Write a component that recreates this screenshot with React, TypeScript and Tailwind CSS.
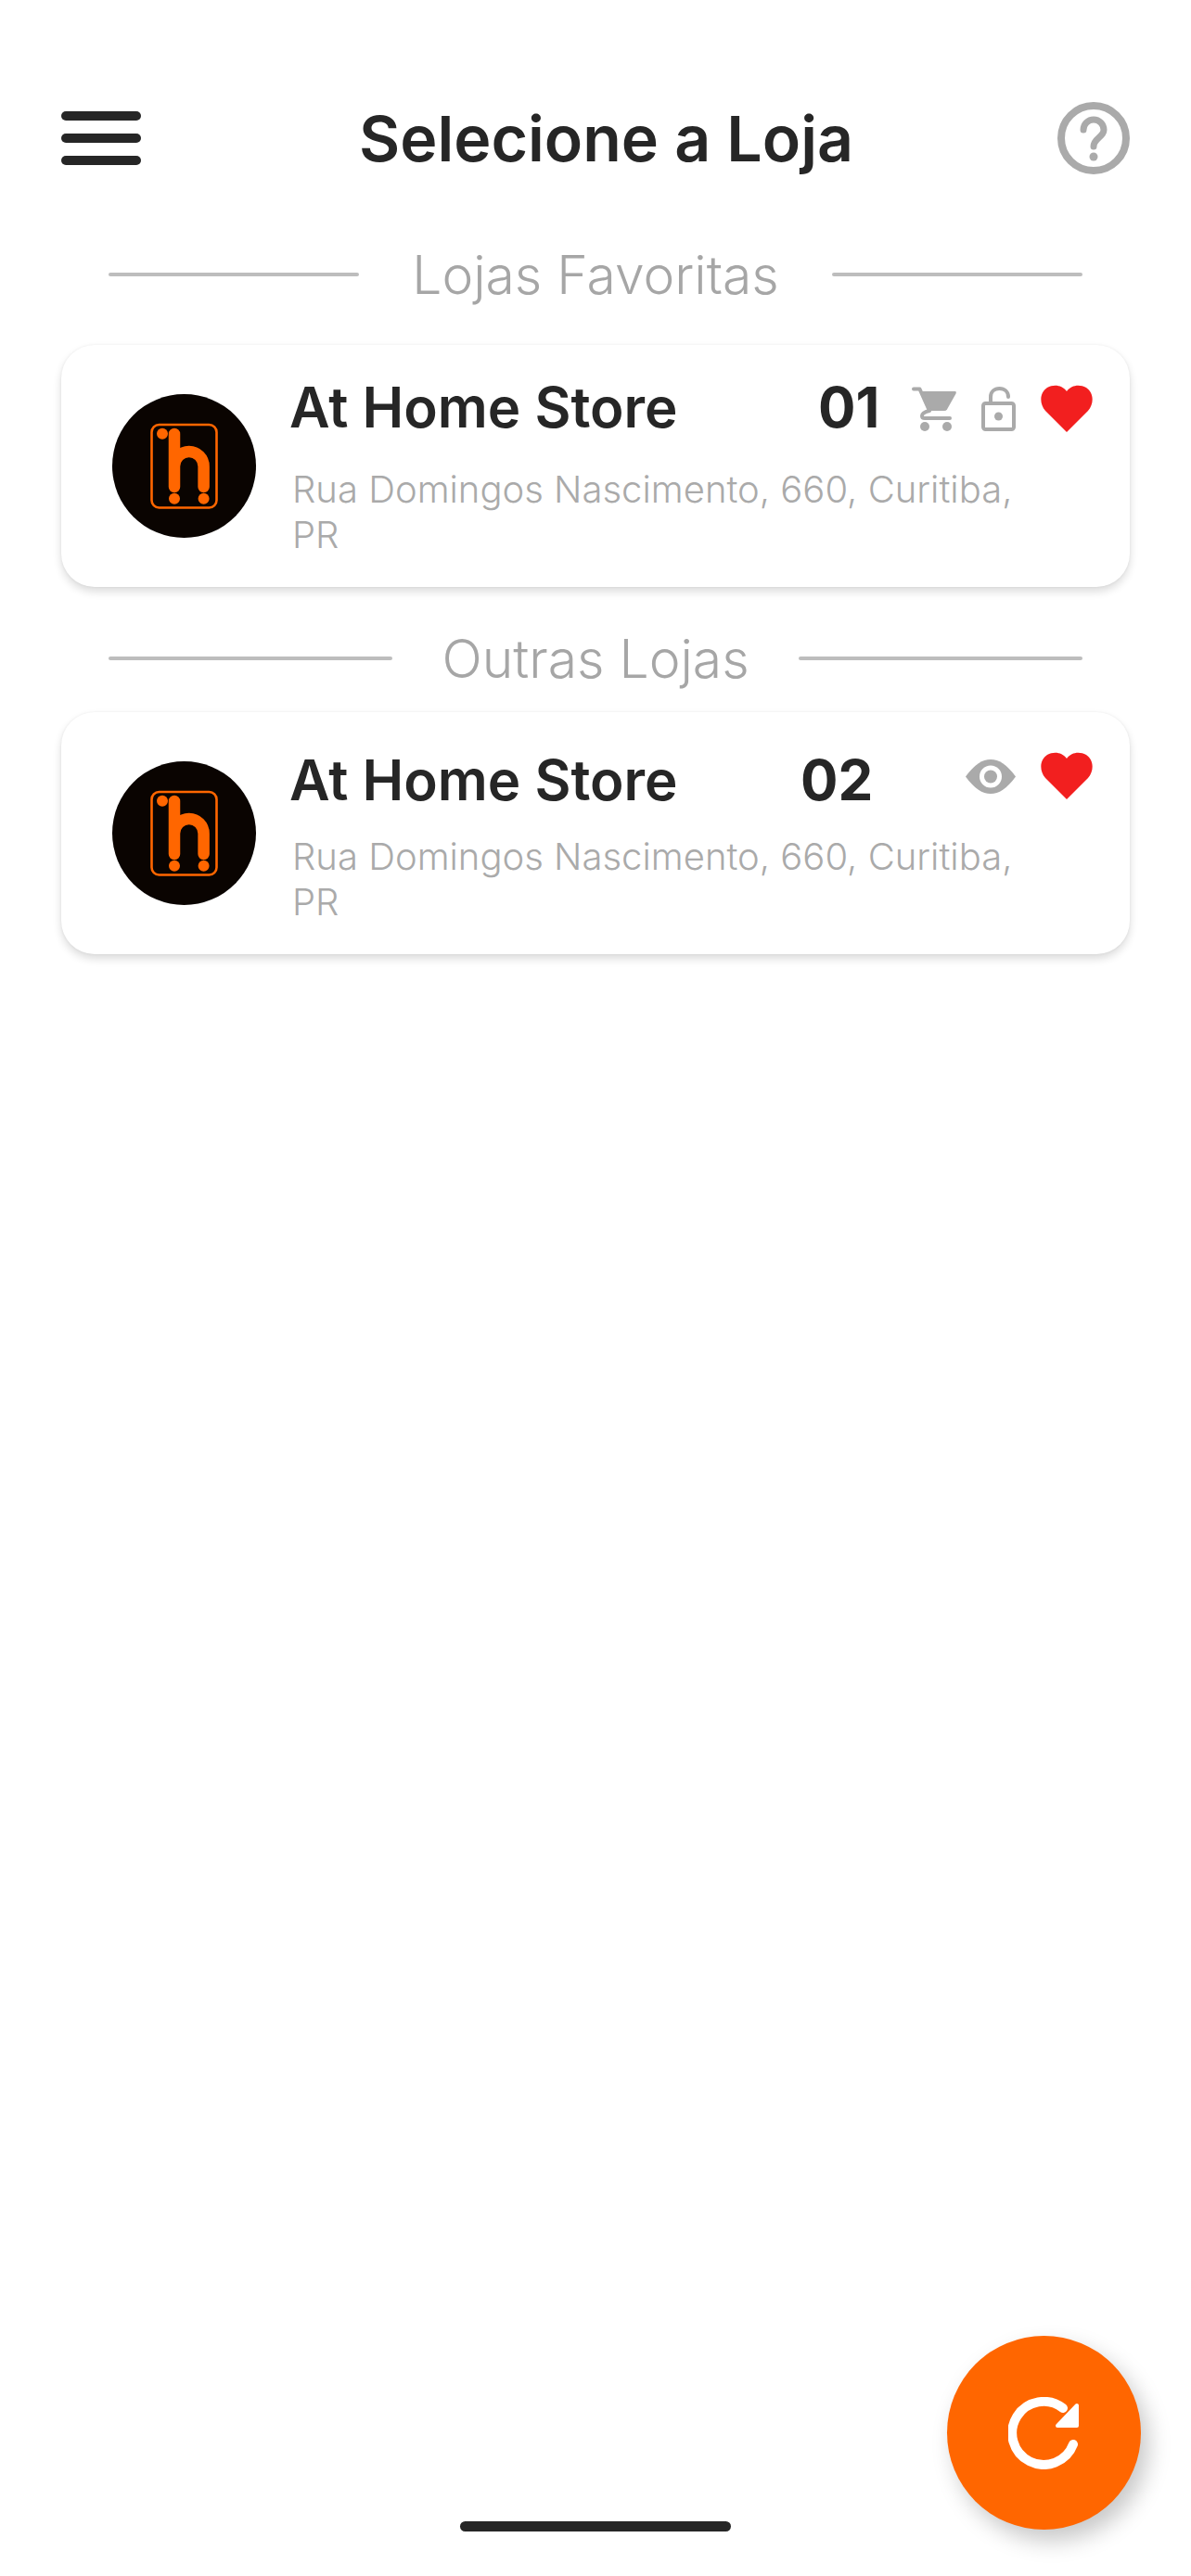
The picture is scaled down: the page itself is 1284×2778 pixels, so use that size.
import React from 'react';

const Logo = () => (
  <svg width="155" height="155" viewBox="0 0 155 155" className="shrink-0">
    <circle cx="77.5" cy="77.5" r="77.5" fill="#0a0401" />
    <rect x="42.5" y="33" width="70" height="89.5" rx="8" fill="none" stroke="#ff6600" strokeWidth="2.6" />
    <circle cx="54" cy="42.7" r="6" fill="#ff6600" />
    <path d="M67 43V100M67 78A15.8 16 0 0 1 98.6 78V100" fill="none" stroke="#ff6600" strokeWidth="12.5" strokeLinecap="round" />
    <circle cx="67" cy="112.7" r="6" fill="#ff6600" />
    <circle cx="98.6" cy="112.7" r="6" fill="#ff6600" />
  </svg>
);

const Heart = () => (
  <svg width="56" height="51" viewBox="0 0 56 51" className="shrink-0">
    <path d="M28 51L5 28C-2 20-1 8 7 3C14-1 23 0 28 7C33 0 42-1 49 3C57 8 58 20 51 28Z" fill="#f21f1f" />
  </svg>
);

const Cart = () => (
  <svg width="48" height="48" viewBox="0 0 48 48" className="shrink-0">
    <path d="M11 5H46.5Q48.500 5 47.500 7.500L38 24.500Q37 26 35 26H18Z" fill="#aaa" />
    <path d="M2 2.500H8.500L19 26Q11 28 11 31.500Q11 34 14 34H41" fill="none" stroke="#aaa" strokeWidth="4" strokeLinecap="round" strokeLinejoin="round" />
    <circle cx="14" cy="43" r="5" fill="#aaa" />
    <circle cx="38" cy="43" r="5" fill="#aaa" />
  </svg>
);

const Lock = () => (
  <svg width="37" height="48" viewBox="0 0 37 48" className="shrink-0">
    <rect x="2" y="18" width="33" height="28" rx="2.500" fill="none" stroke="#aaa" strokeWidth="4" />
    <path d="M10 17V11C10 5.500 14 2 19.500 2C25 2 29 5.500 29 11" fill="none" stroke="#aaa" strokeWidth="4" strokeLinecap="round" />
    <circle cx="18.500" cy="32" r="4.500" fill="#aaa" />
  </svg>
);

const Eye = () => (
  <svg width="54" height="37" viewBox="0 0 54 37" className="shrink-0">
    <path d="M0 18.500C10 5 18 0 27 0C36 0 44 5 54 18.500C44 32 36 37 27 37C18 37 10 32 0 18.500Z" fill="#aaa" />
    <circle cx="27" cy="18.500" r="12" fill="#fff" />
    <circle cx="27" cy="18.500" r="7" fill="#aaa" />
  </svg>
);

const SectionTitle = ({ title, gap }: { title: string; gap: string }) => (
  <div className={`flex items-center px-[117px] ${gap}`}>
    <div className="h-[4px] flex-1 rounded-full bg-[#bdbdbd]" />
    <span className="pt-[2px] text-[57px] leading-[64px] font-light text-[#a6a6a6]">{title}</span>
    <div className="h-[4px] flex-1 rounded-full bg-[#bdbdbd]" />
  </div>
);

const StoreCard = ({ number, rowClass, numberGap, children }: { number: string; rowClass: string; numberGap: string; children: React.ReactNode }) => (
  <div className="mx-[66px] flex h-[261px] items-center rounded-[36px] bg-white pl-[55px] pr-[40px] shadow-[0_5px_10px_rgba(0,0,0,0.14),0_0_3px_rgba(0,0,0,0.06)]">
    <Logo />
    <div className="ml-[36px] flex-1">
      <div className="flex h-[68px] items-start">
        <span className={`w-[417px] text-[60px] leading-[68px] font-semibold whitespace-nowrap text-[#262626] ${rowClass}`}>At Home Store</span>
        <span className={`text-[60px] leading-[68px] font-bold text-[#262626] ${rowClass} ${numberGap}`}>{number}</span>
        <div className="ml-auto flex items-start">{children}</div>
      </div>
      <p className="mt-[30px] ml-[3px] w-[800px] text-[40px] leading-[49px] font-light text-[#aaaaaa]">
        Rua Domingos Nascimento, 660, Curitiba, PR
      </p>
    </div>
  </div>
);

const App: React.FC = () => {
  return (
    <div className="relative h-[2778px] w-[1284px] overflow-hidden bg-white font-['Inter',sans-serif]">
      {/* Header */}
      <div className="flex items-center pt-[110px] pr-[66px] pl-[66px]">
        <div className="flex w-[86px] flex-col gap-[14px]">
          <div className="h-[10px] rounded-full bg-[#262626]" />
          <div className="h-[10px] rounded-full bg-[#262626]" />
          <div className="h-[10px] rounded-full bg-[#262626]" />
        </div>
        <h1 className="flex-1 pl-[15px] text-center text-[68px] leading-[78px] font-semibold text-[#262626]">Selecione a Loja</h1>
        <svg width="78" height="78" viewBox="0 0 78 78" className="shrink-0">
          <circle cx="39" cy="39" r="35" fill="none" stroke="#aaa" strokeWidth="8" />
          <path d="M28 30A11 11 0 0 1 50 30C50 38 39 39 39 48" fill="none" stroke="#aaa" strokeWidth="7" strokeLinecap="round" />
          <circle cx="39" cy="59" r="4.500" fill="#aaa" />
        </svg>
      </div>

      <div className="mt-[75px]">
        <SectionTitle title="Lojas Favoritas" gap="gap-[57px]" />
      </div>
      <div className="mt-[43px]">
        <StoreCard number="01" rowClass="mt-0" numberGap="ml-[153px]">
          <div className="mt-[12px] flex gap-[27px]">
            <Cart />
            <Lock />
          </div>
          <div className="mt-[10px] ml-[27px]">
            <Heart />
          </div>
        </StoreCard>
      </div>

      <div className="mt-[44px]">
        <SectionTitle title="Outras Lojas" gap="gap-[53px]" />
      </div>
      <div className="mt-[25px]">
        <StoreCard number="02" rowClass="mt-[6px]" numberGap="ml-[134px]">
          <div className="mt-[18px]">
            <Eye />
          </div>
          <div className="mt-[10px] ml-[27px]">
            <Heart />
          </div>
        </StoreCard>
      </div>

      {/* Refresh button */}
      <div className="absolute top-[2519px] left-[1021px] flex h-[209px] w-[209px] items-center justify-center rounded-full bg-[#ff6600] shadow-[8px_12px_24px_rgba(0,0,0,0.22)]">
        <svg width="78" height="78" viewBox="0 0 78 78">
          <path d="M70 51A34 34 0 1 1 59 12" fill="none" stroke="#fff" strokeWidth="10" strokeLinecap="round" />
          <path d="M74 9V31H53Z" fill="#fff" stroke="#fff" strokeWidth="4" strokeLinejoin="round" />
        </svg>
      </div>

      {/* Home indicator */}
      <div className="absolute top-[2719px] left-[496px] h-[11px] w-[292px] rounded-full bg-[#262626]" />
    </div>
  );
};

export default App;
